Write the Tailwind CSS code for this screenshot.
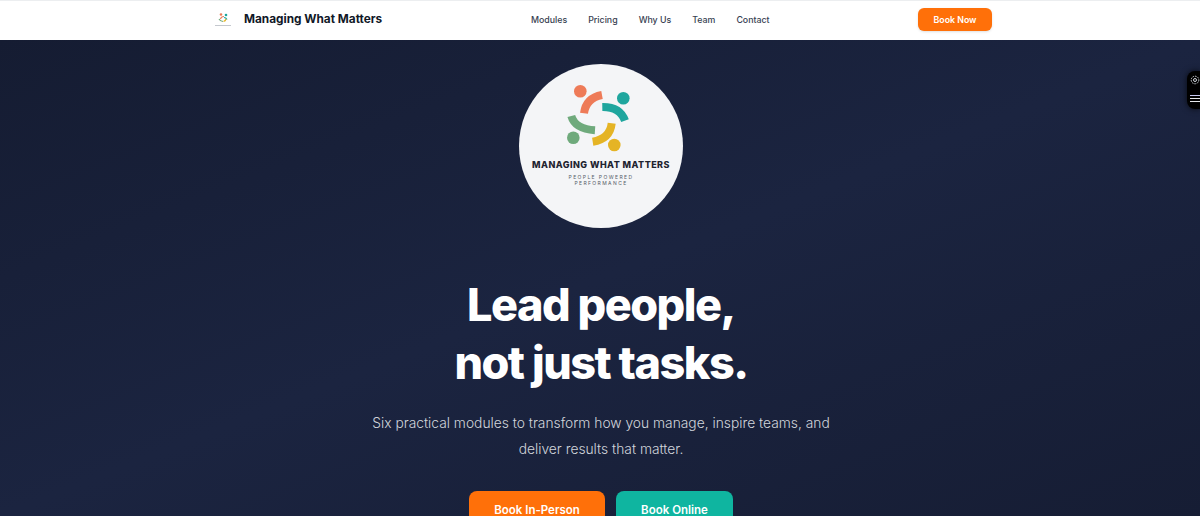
<!DOCTYPE html>
<html lang="en">
<head>
    <meta charset="UTF-8">
    <title>Managing What Matters</title>
    <script src="https://cdn.jsdelivr.net/npm/@tailwindcss/browser@4"></script>
</head>
<body class="h-[516px] overflow-hidden bg-[#182238] font-['Inter',sans-serif]">

    <!-- Nav -->
    <header class="h-10 bg-white shadow-[inset_0_1px_0_#eceef0] flex items-center">
        <div class="w-[800px] mx-auto flex items-center justify-between pl-[14px] pr-[8px] relative">
            <div class="flex items-center gap-[12px]">
                <svg class="w-[18px] h-[18px]" viewBox="0 0 18 18">
                    <circle cx="7" cy="3.5" r="1.3" fill="#ee7b58"/>
                    <circle cx="12" cy="4" r="1.3" fill="#1fa69e"/>
                    <path d="M6.5 8 Q7 5.5 10 5.5" stroke="#ee7b58" stroke-width="1.2" fill="none"/>
                    <path d="M10 6.5 Q12 6.5 13 8.5" stroke="#1fa69e" stroke-width="1.2" fill="none"/>
                    <path d="M5 8 Q6 10 9 10.5" stroke="#6faa7c" stroke-width="1.2" fill="none"/>
                    <path d="M9.5 10.5 Q11.5 10 12 8" stroke="#e5b425" stroke-width="1.2" fill="none"/>
                    <rect x="1" y="14" width="16" height="1" fill="#c4c8ce"/>
                </svg>
                <span class="text-[11.8px] font-bold text-[#111827]">Managing What Matters</span>
            </div>
            <nav class="absolute left-[331px] flex items-center gap-[21px] text-[8.8px] font-medium text-[#374151]">
                <span>Modules</span>
                <span>Pricing</span>
                <span>Why Us</span>
                <span>Team</span>
                <span>Contact</span>
            </nav>
            <button class="w-[74px] h-[23px] -mt-px bg-[#ff7009] rounded-md text-[8.8px] font-semibold text-white shadow-sm">Book Now</button>
        </div>
    </header>

    <!-- Hero -->
    <main class="relative h-[476px] overflow-hidden bg-gradient-to-br from-[#151c32] via-[#1b2440] to-[#161d34] flex flex-col items-center pt-[24px] pl-[2px]">
        <div class="relative w-[164px] h-[164px] rounded-full bg-[#f4f5f7] flex flex-col items-center shrink-0">
            <svg class="absolute inset-0 w-[164px] h-[164px]" viewBox="0 0 164 164">
                <circle cx="61.3" cy="27.3" r="6.3" fill="#ee7b58"/>
                <circle cx="104.3" cy="34.3" r="6.3" fill="#1fa69e"/>
                <circle cx="54.3" cy="73.7" r="6.3" fill="#6faa7c"/>
                <circle cx="95.3" cy="81" r="6.3" fill="#e5b425"/>
                <path d="M65 49.3 Q67 34 83 31" stroke="#ee7b58" stroke-width="8" fill="none"/>
                <path d="M83.3 43 Q101 42.7 106 56.7" stroke="#1fa69e" stroke-width="8" fill="none"/>
                <path d="M52.3 52 Q56 65 76 66.3" stroke="#6faa7c" stroke-width="8" fill="none"/>
                <path d="M92.7 59.3 Q91 75 73.7 77.7" stroke="#e5b425" stroke-width="8" fill="none"/>
            </svg>
            <span class="text-[9px] leading-none font-extrabold tracking-[0.45px] text-[#1f2430] mt-[96px] whitespace-nowrap">MANAGING WHAT MATTERS</span>
            <span class="text-[5px] leading-[6px] tracking-[1.4px] text-[#555b66] mt-[5px] text-center">PEOPLE POWERED<br>PERFORMANCE</span>
        </div>
        <h1 class="mt-[48px] text-[45px] leading-[58px] font-extrabold tracking-[-1.5px] text-white text-center">Lead people,<br>not just tasks.</h1>
        <p class="mt-[18px] text-[13.8px] leading-[26px] font-light text-[#d1d5db] text-center">Six practical modules to transform how you manage, inspire teams, and<br>deliver results that matter.</p>
        <div class="mt-[29px] flex gap-[11px]">
            <button class="w-[136px] h-[40px] bg-[#ff7009] rounded-lg text-[11.5px] font-semibold text-white">Book In-Person</button>
            <button class="w-[117px] h-[40px] bg-[#0fb5a0] rounded-lg text-[11.5px] font-semibold text-white">Book Online</button>
        </div>

        <!-- Side widget -->
        <div class="absolute right-0 top-[31px] w-[13px] h-[38px] bg-black rounded-l-lg shadow-[0_0_6px_rgba(0,0,0,0.7)] flex flex-col items-center gap-[10px] pt-[4px] pl-[3px]">
            <svg class="w-[10px] h-[10px]" viewBox="0 0 10 10" fill="none" stroke="#d1d5db" stroke-width="1">
                <circle cx="5" cy="5" r="1.5"/>
                <circle cx="5" cy="5" r="3.8" stroke-dasharray="1.5 1"/>
            </svg>
            <div class="flex flex-col gap-[2px]">
                <div class="w-[10px] h-px bg-[#c7c9f0]"></div>
                <div class="w-[10px] h-px bg-[#e5e7eb]"></div>
                <div class="w-[10px] h-px bg-[#e5e7eb]"></div>
            </div>
        </div>
    </main>

</body>
</html>
